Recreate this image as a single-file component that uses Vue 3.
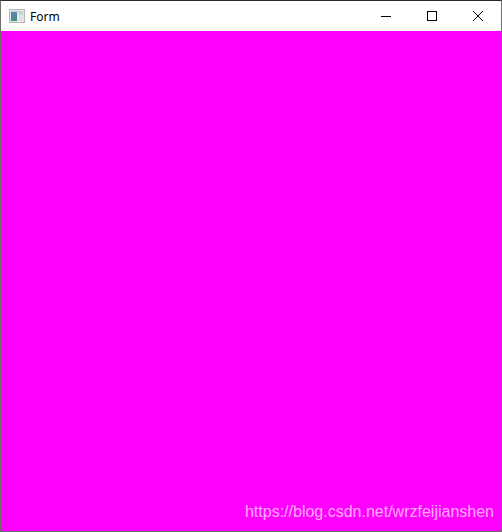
<script setup>
</script>

<template>
  <div class="window">
    <header class="titlebar">
      <div class="title-left">
        <svg class="app-icon" width="16" height="16" viewBox="0 0 16 16">
          <defs>
            <linearGradient id="pane" x1="0" y1="0" x2="0" y2="1">
              <stop offset="0" stop-color="#5f86b8" />
              <stop offset="1" stop-color="#3f8f78" />
            </linearGradient>
          </defs>
          <rect x="0.5" y="1.5" width="15" height="13" fill="#e4e6e6" stroke="#b4b8b8" />
          <rect x="2" y="3" width="12" height="1" fill="#c9cdcd" />
          <rect x="2" y="4" width="6" height="9" fill="url(#pane)" />
          <rect x="10" y="4" width="4" height="3" fill="#b9d8c4" />
          <rect x="10" y="8" width="4" height="5" fill="#dde2e2" />
        </svg>
        <span class="title">Form</span>
      </div>
      <div class="controls">
        <svg width="46" height="30" viewBox="0 0 46 30"><path d="M18 15.5h10" stroke="#000" fill="none" /></svg>
        <svg width="46" height="30" viewBox="0 0 46 30"><rect x="18.5" y="10.5" width="9" height="9" stroke="#000" fill="none" /></svg>
        <svg width="46" height="30" viewBox="0 0 46 30"><path d="M18 10l10 10M28 10l-10 10" stroke="#000" fill="none" /></svg>
      </div>
    </header>
    <main class="client">
      <span class="watermark">https://blog.csdn.net/wrzfeijianshen</span>
    </main>
  </div>
</template>

<style scoped>
.window {
  width: 502px;
  height: 532px;
  box-sizing: border-box;
  display: flex;
  flex-direction: column;
  border-top: 1px solid #2b2b2b;
  border-left: 1px solid #6e6e6e;
  border-right: 1px solid #6e6e6e;
  border-bottom: 1px solid #6e6e6e;
  background: #fff;
  overflow: hidden;
}
.titlebar {
  height: 30px;
  display: flex;
  align-items: center;
  justify-content: space-between;
  background: #fff;
  flex: none;
}
.title-left {
  display: flex;
  align-items: center;
  gap: 5px;
  padding-left: 8px;
}
.app-icon {
  display: block;
}
.title {
  font-family: "Noto Sans", "Open Sans", sans-serif;
  font-size: 12px;
  color: #000;
}
.controls {
  display: flex;
}
.controls svg {
  display: block;
}
.client {
  flex: 1;
  background: #ff00ff;
  display: flex;
  align-items: flex-end;
  justify-content: flex-end;
  padding: 0 7px 10px 0;
}
.watermark {
  font-family: "Liberation Sans", Arial, sans-serif;
  font-size: 16px;
  line-height: 18px;
  color: rgba(255, 255, 255, 0.68);
}
</style>

<style>
html, body {
  margin: 0;
  background: #fff;
}
</style>
